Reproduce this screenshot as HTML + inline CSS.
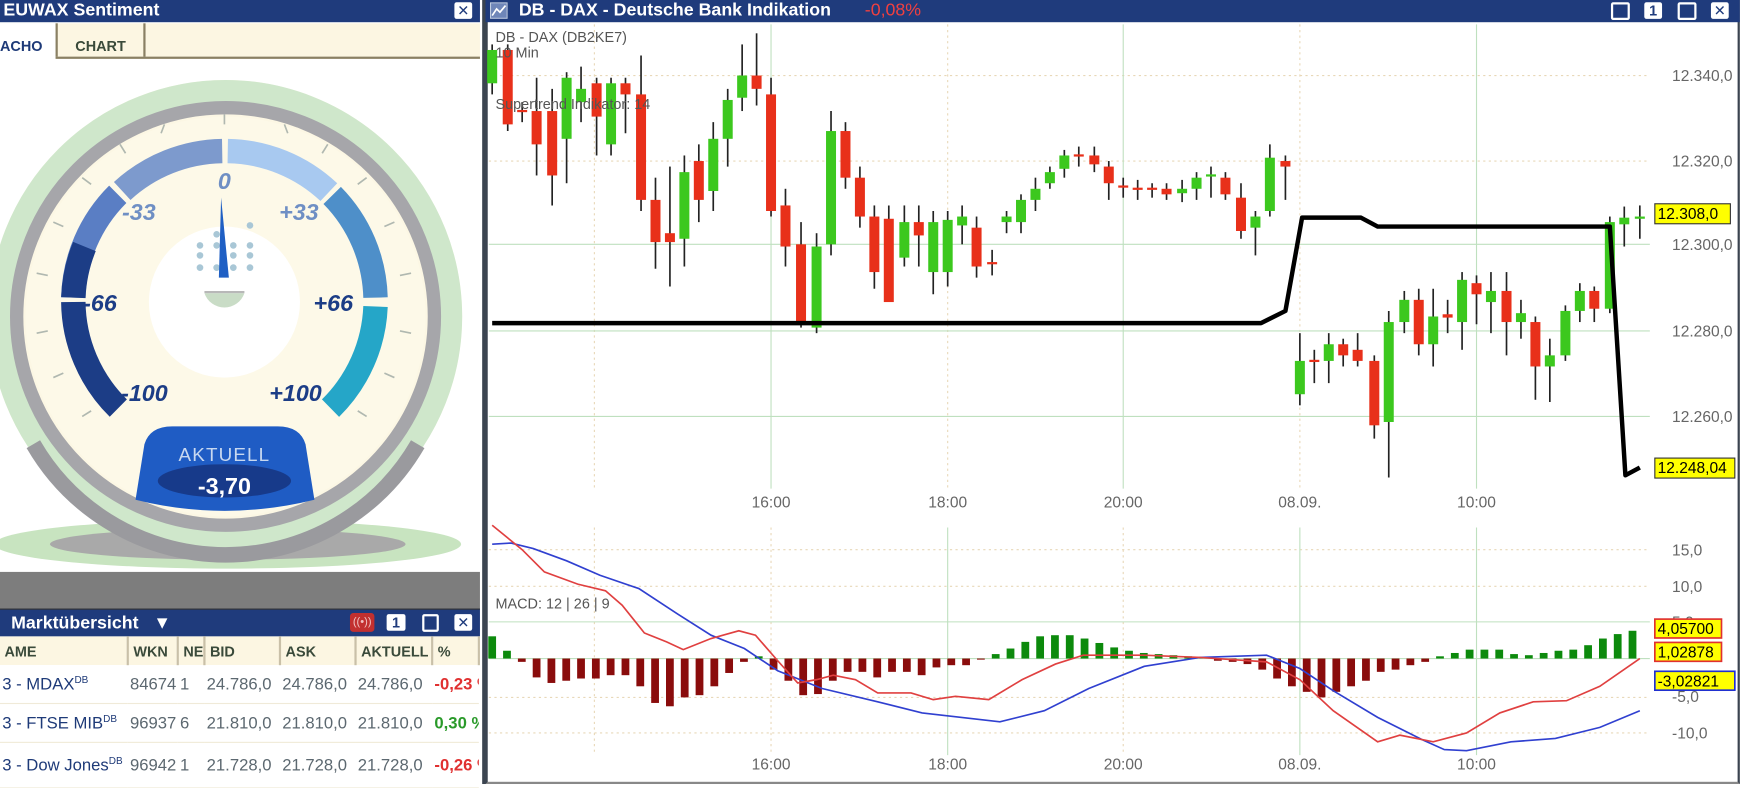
<!DOCTYPE html>
<html><head><meta charset="utf-8">
<style>
html,body{margin:0;padding:0;width:1742px;height:784px;overflow:hidden;background:#fff}
#w{position:absolute;left:0;top:0;width:1568px;height:706px;transform:scale(1.111,1.1105);transform-origin:0 0;font-family:"Liberation Sans","DejaVu Sans",sans-serif}
.hdr{position:absolute;background:#1f3b7c;color:#fff;font-weight:bold;font-size:16px;line-height:20px;height:20px}
.btn{position:absolute;top:2px;width:16px;height:15px;background:#fff;border-radius:2px;color:#1f3b7c;font-size:13px;line-height:15px;text-align:center;font-weight:bold}
.btno{position:absolute;top:2px;width:13px;height:12px;border:2px solid #fff;border-radius:2px}
table{border-collapse:collapse}
.th td{background:#fcf6e2;font-weight:bold;color:#3a4a3a;font-size:13px;border-right:2px solid #c9c0a8;height:26px;padding:0 0 0 4px;white-space:nowrap;overflow:hidden}
.tr td{font-size:15px;color:#5c6870;height:34px;padding:0 0 0 2px;white-space:nowrap;overflow:hidden;border-bottom:1px solid #f0ead8}
.nm{color:#1e3a78!important}
sup{font-size:9px}
</style></head><body>
<div id="w">
<div style="position:absolute;left:0;top:0;width:434px;height:706px;background:#fff;border-right:3px solid #3b4450"></div>
<div class="hdr" style="left:0;top:0;width:432px;padding-left:3px;box-sizing:border-box">EUWAX Sentiment</div>
<div class="btn" style="left:409px">✕</div>
<div style="position:absolute;left:0;top:21px;width:432px;height:30px;background:#fcf6e2;border-bottom:2px solid #8a8064"></div>
<div style="position:absolute;left:0;top:21px;width:50px;height:33px;background:#fff;font-weight:bold;font-size:13px;color:#1e3a78;line-height:42px">ACHO</div>
<div style="position:absolute;left:50px;top:21px;width:77px;height:30px;border-left:2px solid #8a8064;border-right:2px solid #8a8064;font-weight:bold;font-size:13px;color:#3a4a3a;line-height:42px;text-align:center">CHART</div>
<svg style="position:absolute;left:0;top:54px" width="432" height="461" viewBox="0 54 432 461">
 <ellipse cx="205" cy="490" rx="210" ry="22" fill="#c8e4c0"/>
 <ellipse cx="205" cy="490" rx="160" ry="14" fill="#a9a9a9"/>
 <circle cx="203" cy="285" r="213" fill="#fcf7e4"/>
 <circle cx="203" cy="285" r="200" fill="none" stroke="#cfe7cb" stroke-width="26"/>
 <circle cx="203" cy="285" r="188" fill="none" stroke="#a6a6aa" stroke-width="12"/>
 <path d="M 30 400 A 200 200 0 0 0 376 400" fill="none" stroke="#9a9a9e" stroke-width="14"/>
 <circle cx="203" cy="285" r="180" fill="#fdf9e8"/>
 <circle cx="202" cy="272" r="68" fill="#fff"/>
 <g fill="none" stroke-width="22">
  <path d="M 106.5 367.5 A 136 136 0 0 1 66 272" stroke="#1c3d86"/>
  <path d="M 66 268 A 136 136 0 0 1 106 175" stroke="#5a7ec4"/>
  <path d="M 66 268 A 136 136 0 0 1 76 222" stroke="#1c3d86"/>
  <path d="M 110 172 A 136 136 0 0 1 200 136" stroke="#7d9acd"/>
  <path d="M 205 136 A 136 136 0 0 1 296 173" stroke="#a8c9f0"/>
  <path d="M 299 176 A 136 136 0 0 1 338 268" stroke="#4e8fc9"/>
  <path d="M 338 276 A 136 136 0 0 1 297.5 367.5" stroke="#25a6c8"/>
 </g>
 <g stroke="#b0b8b0" stroke-width="1.5">
  <line x1="202" y1="103" x2="202" y2="112"/><line x1="256" y1="112" x2="259" y2="120"/><line x1="148" y1="112" x2="145" y2="120"/>
  <line x1="295" y1="130" x2="290" y2="138"/><line x1="108" y1="130" x2="113" y2="138"/><line x1="330" y1="160" x2="322" y2="166"/>
  <line x1="74" y1="160" x2="82" y2="166"/><line x1="355" y1="200" x2="346" y2="204"/><line x1="48" y1="200" x2="57" y2="204"/>
  <line x1="370" y1="246" x2="360" y2="248"/><line x1="33" y1="246" x2="43" y2="248"/><line x1="370" y1="300" x2="360" y2="298"/>
  <line x1="33" y1="300" x2="43" y2="298"/><line x1="355" y1="340" x2="346" y2="336"/><line x1="48" y1="340" x2="57" y2="336"/>
  <line x1="330" y1="375" x2="322" y2="370"/><line x1="74" y1="375" x2="82" y2="370"/>
 </g>
 <g font-style="italic" font-weight="bold" font-size="21" text-anchor="middle">
  <text x="202" y="170" fill="#6f8fc4">0</text>
  <text x="125" y="198" fill="#6f8fc4">-33</text>
  <text x="269" y="198" fill="#6f8fc4">+33</text>
  <text x="90" y="280" fill="#1c3d86">-66</text>
  <text x="300" y="280" fill="#1c3d86">+66</text>
  <text x="130" y="361" fill="#1c3d86">-100</text>
  <text x="266" y="361" fill="#1c3d86">+100</text>
 </g>
 <g fill="#a9c7d6"><circle cx="180" cy="221" r="3"/><circle cx="195" cy="211" r="3"/><circle cx="195" cy="221" r="3"/><circle cx="210" cy="221" r="3"/><circle cx="225" cy="221" r="3"/><circle cx="180" cy="230" r="3"/><circle cx="210" cy="230" r="3"/><circle cx="225" cy="230" r="3"/><circle cx="180" cy="241" r="3"/><circle cx="195" cy="241" r="3"/><circle cx="210" cy="241" r="3"/><circle cx="225" cy="241" r="3"/><circle cx="225" cy="203" r="3"/></g>
 <path d="M 199 178 L 197 250 L 206 250 Z" fill="#1f5fc4"/>
 <path d="M 184 264 A 19 19 0 0 0 220 264 Z" fill="#c9dcc6"/><path d="M 184 264 L 220 264 L 220 262 L 184 262 Z" fill="#b8b8b8"/>
 <path d="M 122 450 L 130 400 Q 135 384 155 384 L 250 384 Q 270 384 275 400 L 283 450 Q 202 470 122 450 Z" fill="#1f5cc4"/>
 <ellipse cx="202" cy="433" rx="60" ry="15" fill="#173a8a"/>
 <text x="202" y="415" font-size="17" fill="#c8d8f0" text-anchor="middle" letter-spacing="1">AKTUELL</text>
 <text x="202" y="445" font-size="21" font-weight="bold" fill="#fff" text-anchor="middle">-3,70</text>
</svg>
<div style="position:absolute;left:0;top:515px;width:432px;height:33px;background:#7d7d7d"></div>
<div class="hdr" style="left:0;top:548px;width:432px;height:25px;line-height:25px;padding-left:10px;box-sizing:border-box;border-top:1px solid #333">Marktübersicht &nbsp;&nbsp;▼</div>
<div style="position:absolute;left:315px;top:552px;width:22px;height:17px;background:#c23030;border-radius:3px;color:#f0c0c0;font-size:10px;text-align:center;line-height:17px">((•))</div>
<div class="btn" style="left:348px;top:553px;width:17px">1</div>
<div class="btno" style="left:380px;top:553px;width:11px"></div>
<div class="btn" style="left:409px;top:553px">✕</div>
<table style="position:absolute;left:0;top:573px;width:432px;table-layout:fixed">
<colgroup><col style="width:115px"><col style="width:45px"><col style="width:24px"><col style="width:68px"><col style="width:68px"><col style="width:69px"><col></colgroup>
<tr class="th"><td>AME</td><td>WKN</td><td>NE</td><td>BID</td><td>ASK</td><td>AKTUELL</td><td>%</td></tr>
<tr class="tr"><td class="nm">3 - MDAX<sup>DB</sup></td><td>84674</td><td>1</td><td>24.786,0</td><td>24.786,0</td><td>24.786,0</td><td style="color:#e03030;font-weight:bold">-0,23 %</td></tr>
<tr class="tr"><td class="nm">3 - FTSE MIB<sup>DB</sup></td><td>96937</td><td>6</td><td>21.810,0</td><td>21.810,0</td><td>21.810,0</td><td style="color:#2a9a2a;font-weight:bold">0,30 %</td></tr>
<tr class="tr"><td class="nm" style="height:40px">3 - Dow Jones<sup>DB</sup></td><td>96942</td><td>1</td><td>21.728,0</td><td>21.728,0</td><td>21.728,0</td><td style="color:#e03030;font-weight:bold">-0,26 %</td></tr>
</table>

<div style="position:absolute;left:437px;top:0;width:1125px;height:704px;border-left:2px solid #3b4450;border-right:2px solid #3b4450;border-bottom:2px solid #888;background:#fff"></div>
<div class="hdr" style="left:437px;top:0;width:1129px;padding-left:30px;box-sizing:border-box">DB - DAX - Deutsche Bank Indikation <span style="color:#f04040;font-weight:normal;margin-left:26px">-0,08%</span></div>
<svg style="position:absolute;left:441px;top:2px" width="16" height="15"><rect x="0.5" y="0.5" width="15" height="14" fill="#6f86b8" stroke="#c0cce0"/><path d="M2 12 L6 6 L9 9 L14 3" stroke="#fff" stroke-width="1.5" fill="none"/></svg>
<div class="btno" style="left:1450px"></div>
<div class="btn" style="left:1480px">1</div>
<div class="btno" style="left:1510px"></div>
<div class="btn" style="left:1540px">✕</div>
<svg style="position:absolute;left:0;top:0" width="1568" height="706" font-family="Liberation Sans, sans-serif">
 <g stroke="#e8d8b8" stroke-dasharray="2,3" stroke-width="1">
  <line x1="440" y1="68" x2="1485" y2="68"/><line x1="440" y1="145" x2="1485" y2="145"/>
  <line x1="440" y1="495" x2="1485" y2="495"/><line x1="440" y1="528" x2="1485" y2="528"/><line x1="440" y1="628" x2="1485" y2="628"/><line x1="440" y1="660" x2="1485" y2="660"/>
  <line x1="535" y1="22" x2="535" y2="440"/><line x1="853" y1="22" x2="853" y2="440"/><line x1="1170" y1="22" x2="1170" y2="440"/>
  <line x1="535" y1="475" x2="535" y2="680"/><line x1="694" y1="475" x2="694" y2="680"/><line x1="1011" y1="475" x2="1011" y2="680"/>
 </g>
 <g stroke="#bfe0bf" stroke-width="1">
  <line x1="440" y1="220" x2="1485" y2="220"/><line x1="440" y1="298" x2="1485" y2="298"/><line x1="440" y1="375" x2="1485" y2="375"/>
  <line x1="440" y1="560" x2="1485" y2="560"/><line x1="440" y1="593" x2="1485" y2="593"/>
  <line x1="694" y1="22" x2="694" y2="440"/><line x1="1011" y1="22" x2="1011" y2="440"/><line x1="1329" y1="22" x2="1329" y2="440"/>
  <line x1="853" y1="475" x2="853" y2="680"/><line x1="1170" y1="475" x2="1170" y2="680"/><line x1="1329" y1="475" x2="1329" y2="680"/>
 </g>
 <g id="cand"></g>
 <g id="hist"></g>
 <polyline fill="none" stroke="#000" stroke-width="4" stroke-linejoin="round" points="443,291 1135,291 1157,280 1172,196 1225,196 1240,204 1449,204 1463,428 1476,421"/>
 <polyline fill="none" stroke="#3040d0" stroke-width="1.5" points="443,490 460,489 480,494 510,505 540,518 575,530 610,553 640,572 670,584 700,604 740,620 790,632 830,642 900,650 940,640 980,620 1030,600 1080,592 1140,590 1170,602 1200,622 1240,646 1280,666 1300,675 1320,676 1360,668 1400,665 1440,655 1476,640"/>
 <polyline fill="none" stroke="#e04040" stroke-width="1.5" points="443,473 470,495 490,515 520,526 545,532 560,545 580,570 600,578 615,585 640,575 665,568 680,572 700,595 718,615 735,612 750,608 770,612 790,624 820,624 840,630 860,627 890,630 920,612 950,598 975,590 1030,590 1080,592 1140,596 1170,612 1200,640 1240,668 1260,662 1290,668 1320,660 1350,642 1380,632 1410,631 1440,618 1476,593"/>
 <g font-size="13" fill="#555">
  <text x="446" y="38">DB - DAX (DB2KE7)</text>
  <text x="446" y="52">10 Min</text>
  <text x="446" y="98">Supertrend Indikator: 14</text>
  <text x="446" y="548">MACD: 12 | 26 | 9</text>
 </g>
 <g font-size="14" fill="#666">
  <text x="1505" y="73">12.340,0</text><text x="1505" y="150">12.320,0</text><text x="1505" y="225">12.300,0</text><text x="1505" y="303">12.280,0</text><text x="1505" y="380">12.260,0</text>
  <text x="1505" y="500">15,0</text><text x="1505" y="533">10,0</text><text x="1505" y="565">5,0</text><text x="1505" y="632">-5,0</text><text x="1505" y="665">-10,0</text>
  <g text-anchor="middle"><text x="694" y="457">16:00</text><text x="853" y="457">18:00</text><text x="1011" y="457">20:00</text><text x="1170" y="457">08.09.</text><text x="1329" y="457">10:00</text>
  <text x="694" y="693">16:00</text><text x="853" y="693">18:00</text><text x="1011" y="693">20:00</text><text x="1170" y="693">08.09.</text><text x="1329" y="693">10:00</text></g>
 </g>
 <rect x="1489.5" y="183.5" width="68" height="18" fill="#ffff00" stroke="#333"/>
 <text x="1492" y="197" font-size="14" fill="#000">12.308,0</text>
 <rect x="1489.5" y="412.5" width="72" height="18" fill="#ffff00" stroke="#333"/>
 <text x="1492" y="426" font-size="14" fill="#000">12.248,04</text>
 <rect x="1489.5" y="557.5" width="60" height="17" fill="#ffff00" stroke="#e03030" stroke-width="1.5"/>
 <text x="1492" y="571" font-size="14" fill="#000">4,05700</text>
 <rect x="1489.5" y="578.5" width="60" height="17" fill="#ffff00" stroke="#e03030" stroke-width="1.5"/>
 <text x="1492" y="592" font-size="14" fill="#000">1,02878</text>
 <rect x="1489.5" y="604.5" width="72" height="17" fill="#ffff00" stroke="#2030d0" stroke-width="1.5"/>
 <text x="1492" y="618" font-size="14" fill="#000">-3,02821</text>
</svg>
</div>
<script>
var C=[[443,'g',45,75,40,85],[457,'r',45,112,40,118],[470,'r',99,101,92,110],[483,'r',100,130,70,158],[497,'r',100,158,80,185],[510,'g',70,125,65,165],[523,'g',80,92,60,110],[537,'r',75,105,70,140],[550,'g',75,130,70,140],[563,'r',75,85,70,120],[577,'r',85,180,50,190],[590,'r',180,218,160,242],[603,'r',210,218,150,258],[616,'g',155,215,140,240],[629,'r',145,180,130,200],[642,'g',125,172,110,190],[655,'g',90,125,80,150],[668,'g',68,88,40,100],[681,'r',68,80,30,95],[694,'r',85,190,70,195],[707,'r',185,222,170,240],[721,'r',220,290,200,295],[735,'g',222,295,210,300],[748,'g',118,220,100,230],[761,'r',118,160,110,170],[774,'r',160,195,150,205],[787,'r',195,245,185,260],[800,'r',197,272,185,272],[814,'g',200,232,185,240],[827,'r',200,212,185,240],[840,'g',200,245,190,265],[853,'g',198,245,190,258],[866,'g',195,203,185,220],[879,'r',205,240,195,250],[893,'r',236,238,225,248],[906,'g',195,200,190,210],[919,'g',180,200,175,210],[932,'g',170,180,160,190],[945,'g',155,165,150,170],[958,'g',140,152,135,160],[971,'r',139,141,132,150],[985,'r',140,148,132,155],[998,'r',150,165,145,180],[1011,'r',167,169,160,178],[1024,'r',169,171,162,180],[1037,'r',169,171,165,178],[1050,'r',170,175,165,180],[1064,'g',170,174,162,182],[1077,'g',160,170,155,180],[1090,'g',157,159,150,178],[1103,'r',160,175,155,180],[1117,'r',178,208,165,215],[1130,'g',195,205,190,230],[1143,'g',142,190,130,195],[1157,'r',145,150,140,180],[1170,'g',325,355,300,365],[1183,'r',324,326,315,345],[1196,'g',310,325,300,345],[1209,'r',310,320,305,330],[1222,'r',315,325,300,330],[1237,'r',325,383,320,395],[1250,'g',290,380,280,430],[1264,'g',270,290,262,300],[1277,'r',270,310,260,320],[1290,'g',285,310,260,330],[1303,'r',283,286,270,300],[1316,'g',252,290,245,315],[1329,'r',255,265,248,292],[1342,'g',262,272,245,300],[1356,'r',262,290,245,320],[1369,'g',282,290,270,305],[1382,'r',290,330,285,360],[1395,'g',320,330,305,362],[1409,'g',280,320,275,325],[1422,'g',262,280,255,290],[1435,'r',262,278,258,290],[1449,'g',200,278,195,282],[1462,'g',196,202,186,222],[1476,'g',195,197,185,215]];
var s='';C.forEach(function(c){var col=c[1]=='g'?'#3cc81e':'#e8301a';s+='<line x1="'+c[0]+'" y1="'+c[4]+'" x2="'+c[0]+'" y2="'+c[5]+'" stroke="#222" stroke-width="1.5"/>';var h=Math.max(c[3]-c[2],2);s+='<rect x="'+(c[0]-4.5)+'" y="'+c[2]+'" width="9" height="'+h+'" fill="'+col+'"/>';});
document.getElementById('cand').innerHTML=s;
var H=[20,7,-3,-17,-22,-20,-18,-18,-15,-15,-25,-40,-43,-35,-33,-25,-13,-3,2,-10,-20,-33,-32,-20,-12,-12,-17,-12,-12,-15,-8,-6,-6,-1,4,9,15,20,21,21,18,14,10,7,5,4,3,2,1,-2,-3,-5,-10,-18,-25,-30,-35,-30,-25,-20,-12,-10,-6,-3,2,5,8,8,8,4,3,5,7,8,12,18,22,25];
var t='';H.forEach(function(v,i){var x=443+i*13.33;var y=v>0?593-v:593;t+='<rect x="'+(x-3.5)+'" y="'+y+'" width="7" height="'+Math.abs(v)+'" fill="'+(v>0?'#0c8a0c':'#8a0c0c')+'"/>';});
document.getElementById('hist').innerHTML=t;
</script>
</body></html>
